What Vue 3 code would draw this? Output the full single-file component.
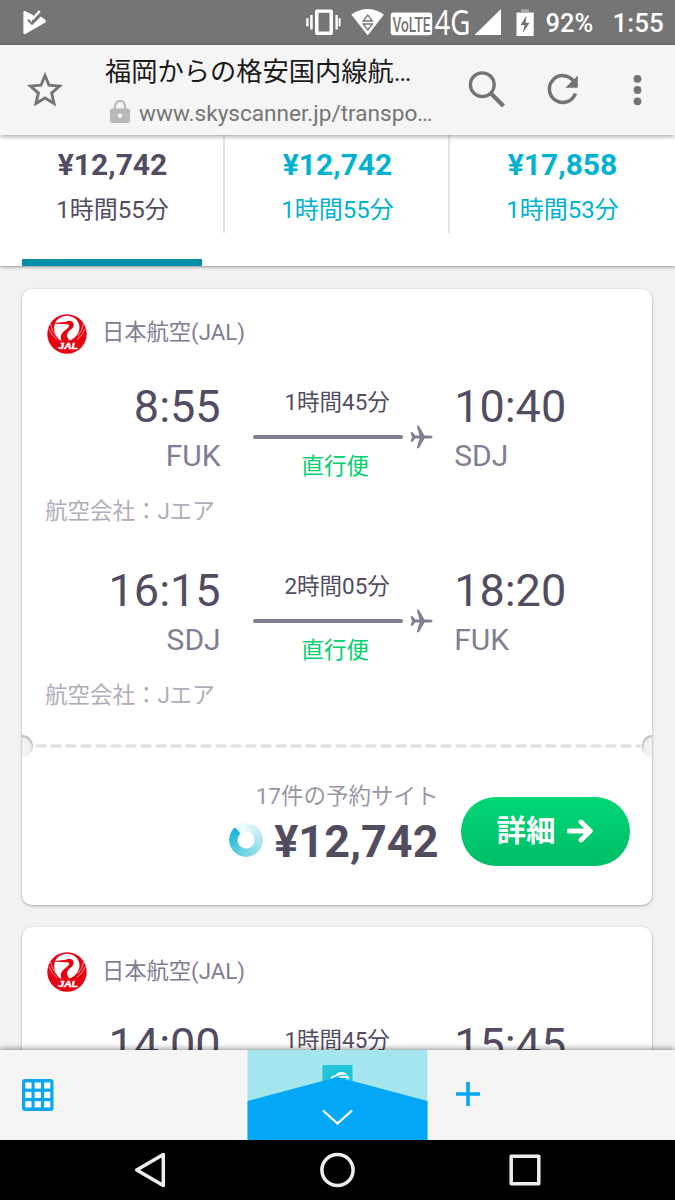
<script setup>
const tabs = [
  { price: '¥12,742', time: '1時間55分', active: true },
  { price: '¥12,742', time: '1時間55分', active: false },
  { price: '¥17,858', time: '1時間53分', active: false },
]
const cards = [
  {
    airline: '日本航空(JAL)',
    legs: [
      { dep: '8:55', from: 'FUK', dur: '1時間45分', arr: '10:40', to: 'SDJ' },
      { dep: '16:15', from: 'SDJ', dur: '2時間05分', arr: '18:20', to: 'FUK' },
    ],
    sites: '17件の予約サイト',
    price: '¥12,742',
  },
  {
    airline: '日本航空(JAL)',
    legs: [{ dep: '14:00', from: 'FUK', dur: '1時間45分', arr: '15:45', to: 'SDJ' }],
  },
]
</script>

<template>
  <div class="screen">
    <header class="status">
      <svg class="play" width="24" height="26" viewBox="0 0 24 26">
        <path d="M2 1 L10.500 5.200 L9 9.500 L9 15 L17.600 6.200 L22.300 10 Q23.800 11.200 22.300 12.400 L2.400 24 Q0.400 24.600 0.400 22.700 V2.400 Q0.400 0.600 2 1Z" fill="#fff" />
        <path d="M5 9.800 L9 13.800 L17.800 4.800" fill="none" stroke="#757575" stroke-width="2" />
        <path d="M9 9.500 L16.800 1" fill="none" stroke="#fff" stroke-width="2.400" />
      </svg>
      <svg class="signals" width="240" height="45" viewBox="300 0 240 45">
        <g fill="#fff">
          <path fill-rule="evenodd" d="M317 9.500 h14 q2 0 2 2 v21.500 q0 2 -2 2 h-14 q-2 0 -2 -2 v-21.500 q0 -2 2 -2Z M318.500 12.800 v18.800 h11 v-18.800Z" />
          <rect x="310.200" y="15" width="2.500" height="14.500" /><rect x="306.200" y="18.200" width="2.400" height="8" />
          <rect x="335.400" y="15" width="2.400" height="14.500" /><rect x="338.600" y="18.200" width="2" height="8" />
          <path d="M351.300 14.500 Q367.500 3.500 384 14.500 L367.700 35.500Z" />
          <rect x="390.700" y="12.500" width="41.500" height="22.700" rx="3" />
          <path d="M501 9 V35 H474.500Z" />
          <path d="M516.500 12.500 h17.200 v23.500 h-17.200Z" />
        </g>
        <rect x="521" y="9.300" width="8" height="3.200" fill="#a8a8a8" />
        <path d="M526.500 15.500 L520.500 25 H524.500 L522.800 33 L529.500 22.800 H525.600Z" fill="#757575" />
        <path d="M363.200 21 L367.800 15 L372.400 21Z M363.200 24 L367.800 30 L372.400 24Z" fill="none" stroke="#757575" stroke-width="1.300" />
        <text x="392.500" y="31.800" class="volte" textLength="38" lengthAdjust="spacingAndGlyphs">VoLTE</text>
        <text x="434.500" y="35" class="four-g" textLength="36" lengthAdjust="spacingAndGlyphs">4G</text>
      </svg>
      <span class="battery">92%</span>
      <span class="clock">1:55</span>
    </header>

    <div class="toolbar">
      <svg class="star" width="38" height="38" viewBox="0 0 38 38">
        <path d="M19 4.500 L23 14.200 L33.500 15.100 L25.600 22.100 L28 32.400 L19 27 L10 32.400 L12.400 22.100 L4.500 15.100 L15 14.200Z" fill="none" stroke="#757575" stroke-width="2.900" />
      </svg>
      <div class="page-info">
        <div class="title">福岡からの格安国内線航…</div>
        <div class="url">
          <svg width="20" height="24" viewBox="0 0 20 24">
            <path d="M5 9 V6 a5 5 0 0 1 10 0 V9" fill="none" stroke="#b8b8b8" stroke-width="2.200" />
            <rect x="0" y="8.500" width="20" height="14.500" rx="2" fill="#b8b8b8" />
            <circle cx="10" cy="15.700" r="2.300" fill="#f5f5f5" />
          </svg>
          <span>www.skyscanner.jp/transpo…</span>
        </div>
      </div>
      <svg class="actions" width="190" height="50" viewBox="460 65 190 50">
        <g fill="none" stroke="#737373">
          <circle cx="482.300" cy="84.700" r="11.900" stroke-width="3.300" />
          <path d="M491 93.500 L503.500 106" stroke-width="4" />
          <path d="M573.500 81 A13.400 13.400 0 1 0 575.400 93.500" stroke-width="3.500" />
        </g>
        <path d="M577.800 75.500 V87.700 H565.300Z" fill="#737373" />
        <g fill="#737373"><circle cx="637.500" cy="78.800" r="3.900" /><circle cx="637.500" cy="90" r="3.900" /><circle cx="637.500" cy="101.300" r="3.900" /></g>
      </svg>
    </div>

    <main class="content">
      <nav class="tabs">
        <div v-for="(t, i) in tabs" :key="i" class="tab" :class="{ active: t.active }">
          <div class="tab-body">
            <b>{{ t.price }}</b>
            <span>{{ t.time }}</span>
          </div>
          <i class="bar"></i>
        </div>
      </nav>

      <section v-for="(c, i) in cards" :key="i" class="card">
        <div class="airline">
          <svg width="40" height="40" viewBox="0 0 40 40">
            <circle cx="20" cy="20" r="19.700" fill="#e50012" />
            <path d="M19.500 1.800 C11 2.500 6.500 8.500 7.200 15.500 C7.700 20.500 10.500 25 14.800 27.300 L22.500 26.600 C28 24.600 32.300 19.500 32.500 13.500 C32.600 7 27.500 2 19.500 1.800Z" fill="#fff" />
            <path d="M8 9.800 L8 8.900 L19 7.700 C21.500 6 26.200 6.900 26.700 10.300 C27 13.600 23.500 15.500 21.300 18 C19.500 20.500 19.700 23.800 23 26.800 L14.800 27.600 C12.800 23 13.800 20.300 17 17.300 C19 15.500 21.300 14 22 12.300 C22.500 10.700 21.500 10.200 19.500 10.200Z" fill="#e50012" />
            <path d="M3.500 10 Q4.500 17 9.500 22 M1.800 14.500 Q4 21 10 25.500 M36.500 10 Q35.500 17 30.500 22 M38.200 14.500 Q36 21 30 25.500" fill="none" stroke="#fff" stroke-width="0.600" />
            <text x="11" y="34.800" class="jal" textLength="20" lengthAdjust="spacingAndGlyphs">JAL</text>
          </svg>
          <span>{{ c.airline }}</span>
        </div>

        <div v-for="(l, j) in c.legs" :key="j" class="leg">
          <div class="leg-main">
            <div class="point dep">
              <div class="time">{{ l.dep }}</div>
              <div class="code">{{ l.from }}</div>
            </div>
            <div class="route">
              <div class="dur">{{ l.dur }}</div>
              <div class="line">
                <i></i>
                <svg width="23" height="24" viewBox="0 0 23 24">
                  <path d="M0.500 7.200 H2.700 L5.300 10.600 H9.500 L6.700 0.800 H8.800 L14.500 10.600 H20.500 Q22.600 10.800 22.600 12 Q22.600 13.200 20.500 13.400 H14.500 L8.800 23.200 H6.700 L9.500 13.400 H5.300 L2.700 16.800 H0.500 L2 12Z" fill="#827d92" />
                </svg>
              </div>
              <div class="direct">直行便</div>
            </div>
            <div class="point">
              <div class="time">{{ l.arr }}</div>
              <div class="code">{{ l.to }}</div>
            </div>
          </div>
          <div class="operator">航空会社：Jエア</div>
        </div>

        <template v-if="c.price">
          <div class="tear">
            <i class="notch"></i>
            <svg width="609" height="4" viewBox="0 0 609 4">
              <path d="M4 2 H607" stroke="#e2e1e7" stroke-width="3.600" stroke-linecap="round" stroke-dasharray="8 7" />
            </svg>
            <i class="notch right"></i>
          </div>
          <div class="buy">
            <div class="offer">
              <div class="sites">{{ c.sites }}</div>
              <div class="total"><i class="ring"></i><b>{{ c.price }}</b></div>
            </div>
            <button class="details">
              <span>詳細</span>
              <svg width="26" height="24" viewBox="0 0 26 24">
                <path d="M2 12 H23 M14 3 L23.300 12 L14 21" fill="none" stroke="#fff" stroke-width="4.800" stroke-linecap="round" stroke-linejoin="round" />
              </svg>
            </button>
          </div>
        </template>
      </section>
    </main>

    <footer class="bottom">
      <div class="side">
        <svg width="32" height="32" viewBox="0 0 32 32">
          <rect x="0" y="0" width="31.500" height="32" rx="3" fill="#0ba5f3" />
          <g fill="#fff">
            <rect v-for="n in 9" :key="n" :x="3.3 + ((n - 1) % 3) * 9.4" :y="3.4 + Math.floor((n - 1) / 3) * 9.4" width="6.200" height="6.200" />
          </g>
        </svg>
      </div>
      <svg class="current" width="181" height="90" viewBox="-0.5 0 181 90">
        <rect width="180" height="90" fill="#a5e6ee" />
        <rect x="75" y="15" width="30" height="30" fill="#22c3d8" />
        <path d="M77.500 33 Q79 29 83 29.500 Q83 25.500 87.500 25.500 Q90 21.500 95 22 Q98.500 22.500 99.500 25 Q102 27 102.500 30 Q103.500 31.500 103 33Z" fill="#fff" />
        <path d="M83 30.500 Q90 24.500 99.500 25.500 M87 32 Q94 26.500 102.500 29.500" fill="none" stroke="#22c3d8" stroke-width="1.100" />
        <path d="M0 51 L90 27 L180 51 V90 H0Z" fill="#03a7f6" />
        <path d="M75.500 60.500 L90 73.500 L104.500 60.500" fill="none" stroke="#fff" stroke-width="2.300" />
      </svg>
      <svg class="plus" width="24" height="24" viewBox="0 0 24 24">
        <path d="M0 12 H24 M12 0 V24" stroke="#08a7f5" stroke-width="3.600" />
      </svg>
    </footer>

    <div class="navbar">
      <svg width="675" height="60" viewBox="0 0 675 60" fill="none" stroke="#eee" stroke-width="3.500" stroke-linejoin="round">
        <path d="M163.300 14.500 V45.500 L136.700 30Z" />
        <circle cx="337.500" cy="30" r="15.600" />
        <rect x="511.200" y="16.200" width="27.600" height="27.600" />
      </svg>
    </div>
  </div>
</template>

<style>
body { margin: 0; overflow: hidden; }
</style>

<style scoped>
.screen {
  width: 675px; height: 1200px; overflow: hidden;
  display: flex; flex-direction: column;
  background: #f2f2f5;
  font-family: Roboto, "Noto Sans CJK JP", sans-serif;
  color: #524c61;
}
.screen * { box-sizing: border-box; }
svg { display: block; flex: none; }
.status {
  height: 45px; flex: none; background: #757575; color: #fff;
  display: flex; align-items: center; padding: 2px 0 0 23px;
  font-size: 25.500px; font-weight: 500; line-height: 45px;
}
.play, .signals { margin-top: -2px; }
.signals { margin-left: 253px; }
.battery { margin-left: 5.500px; width: 67px; }
.clock { font-size: 26px; white-space: nowrap; }
.volte { font: 500 20px Roboto, sans-serif; fill: #757575; }
.four-g { font: 400 34px "Noto Sans", sans-serif; fill: #fff; }
.toolbar {
  height: 90px; flex: none; background: #f5f5f5; display: flex; align-items: center;
  padding-left: 26px; position: relative; z-index: 2; box-shadow: 0 1px 5px rgba(0, 0, 0, .42);
}
.page-info { width: 330px; margin-left: 41px; height: 90px; padding-top: 7px; white-space: nowrap; }
.title { font-size: 26.250px; line-height: 40px; color: #1b1b1b; }
.url { display: flex; align-items: center; gap: 9px; padding-left: 5px; font-size: 22.600px; line-height: 36px; color: #757575; margin-top: 4px; }
.url svg { margin-top: -4px; }
.actions { margin-left: 25px; }
.content { flex: 1; min-height: 0; overflow: hidden; }
.tabs { height: 131px; display: flex; background: #fff; box-shadow: 0 1px 3px rgba(0, 0, 0, .4); }
.tab { width: 225px; text-align: center; color: #00b2d0; display: flex; flex-direction: column; }
.tab-body { height: 98px; padding: 12px 0 0 2px; border-right: 2px solid #e4e3e8; display: flex; flex-direction: column; gap: 12px; }
.tab:last-child .tab-body { border-right-color: transparent; }
.tab b { font-size: 30px; line-height: 36px; }
.tab span { font-size: 24px; line-height: 30px; font-weight: 400; }
.tab.active { color: #524c61; }
.bar { width: 180px; height: 7px; margin: auto auto 0 22.400px; }
.active .bar { background: #008ea8; }
.card {
  width: 630px; margin: 23px 0 0 22.400px; background: #fff; border-radius: 10px;
  box-shadow: 0 1px 3px rgba(0, 0, 0, .32); padding-bottom: 39px; overflow: hidden;
}
.card + .card { margin-top: 22px; }
.airline { height: 91px; padding: 25px 0 0 25px; display: flex; gap: 14.500px; font-size: 22.300px; line-height: 37px; color: #827d92; }
.card + .card .airline span { margin-top: 1px; }
.jal { font: italic 700 8.500px "Liberation Sans", sans-serif; fill: #fff; stroke: #fff; stroke-width: .4px; }
.leg + .leg { margin-top: 38px; }
.leg-main { display: flex; height: 104px; }
.point { width: 198.500px; }
.dep { text-align: right; }
.time { font-size: 45px; line-height: 53px; }
.code { font-size: 30px; line-height: 36px; margin-top: 5px; color: #827d92; }
.route { width: 180px; margin: 7px 21.500px 0 32px; font-size: 22.500px; line-height: 30px; }
.dur { width: 169px; text-align: center; }
.line { display: flex; align-items: center; height: 22px; margin-top: 9px; gap: 7px; }
.line i { width: 150px; height: 4px; border-radius: 2px; background: #827d92; flex: none; }
.direct { width: 165px; text-align: center; color: #00d06d; margin-top: 3px; }
.operator { margin: 12px 0 0 22.500px; font-size: 22.500px; line-height: 30px; color: #b0acba; }
.tear { height: 22px; margin-top: 25px; display: flex; align-items: center; }
.notch { flex: none; width: 10.500px; height: 22px; border-radius: 0 11px 11px 0; background: #f2f2f5; box-shadow: inset -1px 2px 2px rgba(0, 0, 0, .22); }
.notch.right { border-radius: 11px 0 0 11px; box-shadow: inset 1px 2px 2px rgba(0, 0, 0, .22); }
.buy { display: flex; justify-content: flex-end; padding: 24px 22.400px 0 0; }
.offer { text-align: right; font-size: 22.500px; line-height: 30px; color: #9a96a6; margin-right: 22.500px; height: 85px; }
.total { display: flex; align-items: center; justify-content: flex-end; margin-top: 5px; gap: 11px; color: #524c61; }
.total b { font-size: 45px; line-height: 52px; }
.ring {
  width: 34px; height: 34px; border-radius: 50%; margin-top: -4px;
  background: conic-gradient(#e8f8fb 0deg, #a9e5ef 100deg, #72d3e4 190deg, #16b4d3 318deg, #edfafd 320deg);
  mask: radial-gradient(circle, transparent 8px, #000 8.800px);
}
.details {
  width: 169px; height: 69px; margin-top: 16px; border: 0; border-radius: 35px; padding: 0 2px 2px 0;
  background: linear-gradient(#00d775, #00bd68); color: #fff;
  display: flex; align-items: center; justify-content: center; gap: 11px;
  font: 700 29.500px/40px Roboto, "Noto Sans CJK JP", sans-serif;
}
.bottom {
  height: 90px; flex: none; display: flex; background: #f5f5f5;
  position: relative; z-index: 2; box-shadow: 0 -1px 6px rgba(0, 0, 0, .45);
}
.side { width: 247px; padding: 29px 0 0 22px; }
.plus { margin: 32px 0 0 28px; }
.navbar { height: 60px; flex: none; background: #000; position: relative; z-index: 3; }
</style>
